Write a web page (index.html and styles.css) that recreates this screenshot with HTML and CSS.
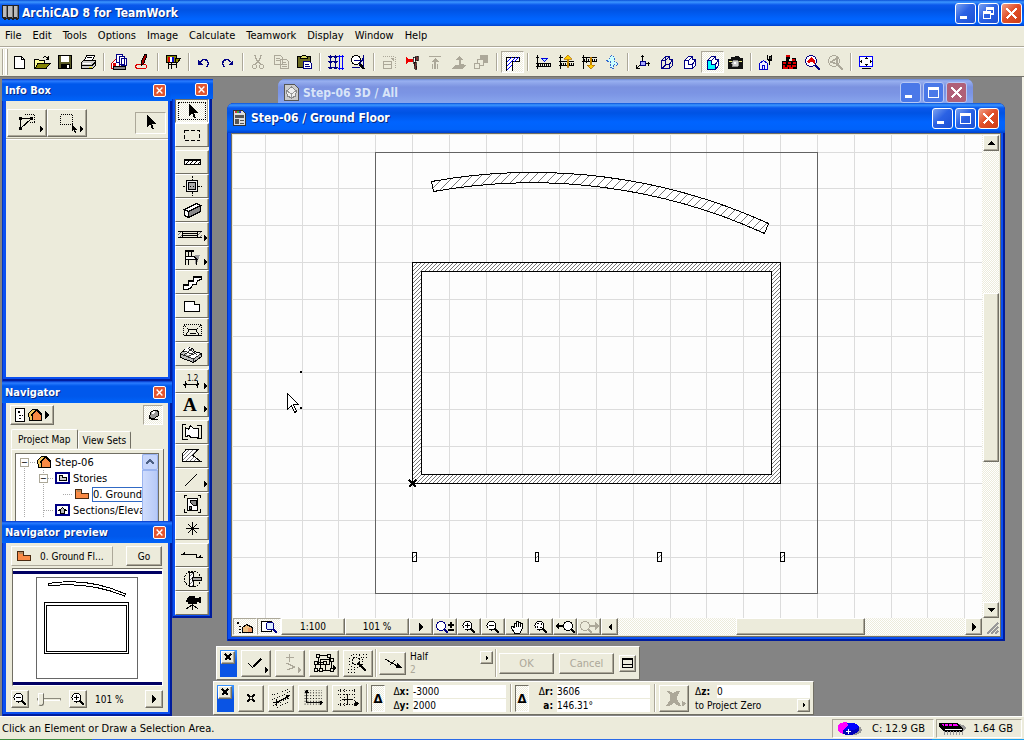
FILE: index.html
```html
<!DOCTYPE html>
<html lang="en">
<head>
    <meta charset="UTF-8">
    <title>ArchiCAD 8 for TeamWork</title>
    <link rel="stylesheet" href="styles.css">
</head>
<body>
    <!-- shared patterns and glyphs -->
    <svg class="defs" width="0" height="0" aria-hidden="true">
        <defs>
            <pattern id="hatch" width="4" height="4" patternUnits="userSpaceOnUse">
                <path d="M-1 5L5 -1M-1 1L1 -1M3 5L5 3" stroke="#777" stroke-width="1.1"/>
            </pattern>
            <pattern id="hatch-wide" width="9" height="9" patternUnits="userSpaceOnUse">
                <path d="M-1 10L10 -1" stroke="#777" stroke-width="1"/>
            </pattern>
            <pattern id="dots" width="3" height="3" patternUnits="userSpaceOnUse">
                <path d="M0 0h1v1h-1z" fill="#000"/>
            </pattern>
            <symbol id="i-min" viewBox="0 0 19 19"><path d="M4 12h7v3H4z" fill="#fff"/></symbol>
            <symbol id="i-max" viewBox="0 0 19 19"><path d="M4 4h11v11H4zM5 7v7h9V7z" fill="#fff" fill-rule="evenodd"/></symbol>
            <symbol id="i-restore" viewBox="0 0 19 19"><path d="M7 3h8v8h-3V9h2V6H8v1H7zM4 7h8v8H4zM5 10v4h6v-4z" fill="#fff" fill-rule="evenodd"/></symbol>
            <symbol id="i-close" viewBox="0 0 19 19"><path d="M4.500 4.500L14.500 14.500M14.500 4.500L4.500 14.500" stroke="#fff" stroke-width="2.400"/></symbol>
            <symbol id="i-arrow" viewBox="0 0 10 16"><path d="M1 0v12l3-3 2 5h2l-2-5h4z"/></symbol>
            <symbol id="i-right" viewBox="0 0 4 8"><path d="M0 0l4 4-4 4z"/></symbol>
            <symbol id="i-story" viewBox="0 0 16 12"><path d="M1.500 1.500h6v4h7v5h-13z" fill="#f98a45" stroke="#4a2a10"/><path d="M3 2h4v2H3z" fill="#b58a60"/></symbol>
            <symbol id="i-house" viewBox="0 0 16 14"><path d="M1.500 5.500l4-4h4v11h-7z" fill="#f0c860" stroke="#000"/><path d="M5.500 6.500l4-4 5 4v6h-9z" fill="#f98a45" stroke="#000"/><path d="M4 7l6-5 5 5" fill="none" stroke="#000" stroke-width="1.500"/></symbol>
            <symbol id="i-lens" viewBox="0 0 14 14"><circle cx="5.500" cy="5.500" r="4.500" fill="#fff" stroke="#000"/><path d="M9 9l4 4" stroke="#000" stroke-width="2.400"/></symbol>
        </defs>
    </svg>

    <div class="app">
        <header class="titlebar">
            <svg class="app-icon" viewBox="0 0 17 18"><path d="M0 1h17v13l-2 3-2-3-2 3-2-3-2 3-2-3-2 3-3-3z" fill="#222"/><path d="M1 2h3v11H1zM6 2h4v11H6zM12 2h3v11h-3z" fill="#bbb"/><path d="M4 2h1v12H4zM10 2h1v12h-1zM15 2h1v12h-1z" fill="#777"/></svg>
            <h1 class="title">ArchiCAD 8 for TeamWork</h1>
            <div class="win-buttons">
                <button class="wb" aria-label="Minimize"><svg><use href="#i-min"/></svg></button>
                <button class="wb" aria-label="Restore"><svg><use href="#i-restore"/></svg></button>
                <button class="wb close" aria-label="Close"><svg><use href="#i-close"/></svg></button>
            </div>
        </header>

        <nav class="menubar">
            <button>File</button><button>Edit</button><button>Tools</button><button>Options</button><button>Image</button><button>Calculate</button><button>Teamwork</button><button>Display</button><button>Window</button><button>Help</button>
        </nav>

        <div class="toolbar">
            <span class="grip"></span>
            <button aria-label="New"><svg viewBox="0 0 17 17"><path d="M3.500 2.500h7l3 3v9h-10z" fill="#fff" stroke="#000"/><path d="M10.500 2.500v3h3" fill="none" stroke="#000"/></svg></button>
            <button aria-label="Open"><svg viewBox="0 0 17 17"><path d="M0.500 14V5.500h4l1 1h5v3" fill="#ffff9c" stroke="#000"/><path d="M1 14.500l3-5h12l-4 5z" fill="#848400" stroke="#000"/><path d="M9 3.500q3-2 5 1M14.500 2v3h-3" fill="none" stroke="#000"/></svg></button>
            <button aria-label="Save"><svg viewBox="0 0 17 17"><path d="M1.500 1.500h13v13h-13z" fill="#5b5b28" stroke="#000"/><path d="M4 2h8v6H4z" fill="#fff"/><path d="M4 10h9v5H4z" fill="#000"/><path d="M10 11h2v3h-2z" fill="#fff"/></svg></button>
            <button aria-label="Print"><svg viewBox="0 0 17 17"><path d="M4.500 6.500l2-5h8l-2 5z" fill="#fff" stroke="#000"/><path d="M1.500 8.500l2-2h12v5l-3 3h-11z" fill="#ccc" stroke="#000"/><path d="M2 11.500h10l3-3M7 3.500h5" fill="none" stroke="#000"/><path d="M3 9.500h8" stroke="#fff"/><path d="M9 13h3" stroke="#dd0"/></svg></button>
            <span class="sep"></span>
            <button aria-label="Send changes"><svg viewBox="0 0 17 17"><path d="M0.500 9.500l4-4 4 4v5h-8z" fill="#fff" stroke="#c00"/><path d="M2 9h3v5H2z" fill="#d00"/><path d="M2.500 12.500h12v3h-12z" fill="#888" stroke="#000"/><path d="M5.500 0.500h6v8h-6z" fill="#fff" stroke="#000084"/><path d="M8.500 2.500h5v8h-5zM10.500 4.500h5v7h-5z" fill="#fff" stroke="#000084"/></svg></button>
            <button aria-label="Mark up"><svg viewBox="0 0 17 17"><ellipse cx="7" cy="12.500" rx="5.500" ry="2.500" fill="none" stroke="#d00"/><path d="M11 0l2 1-3 8-3 3 0-4z" fill="#a00" stroke="#000"/></svg></button>
            <span class="sep"></span>
            <button aria-label="Library"><svg viewBox="0 0 17 17"><path d="M1.500 1.500h10v7h-10z" fill="#848400" stroke="#000"/><path d="M3 3h2v5H3z" fill="#d00"/><path d="M5 3h2v5H5z" fill="#fff"/><path d="M7 3h2v5H7z" fill="#00d"/><path d="M10.500 4.500h5l-3 4h-2z" fill="#848400" stroke="#000"/><path d="M3.500 9v6M6.500 9v6M11.500 9v5M3 10.500h9" stroke="#000"/></svg></button>
            <span class="sep"></span>
            <button aria-label="Undo"><svg viewBox="0 0 17 17"><path d="M4 8q5-5 8 0 1 3-2 5" fill="none" stroke="#000084" stroke-width="1.400"/><path d="M2 6v5h5z" fill="#000084"/></svg></button>
            <button aria-label="Redo"><svg viewBox="0 0 17 17"><path d="M12 8q-5-5-8 0-1 3 2 5" fill="none" stroke="#000084" stroke-width="1.400"/><path d="M14 6v5H9z" fill="#000084"/></svg></button>
            <span class="sep"></span>
            <button aria-label="Cut" disabled><svg viewBox="0 0 17 17"><path d="M5 1l1 4 5 6M11 1l-1 4-5 6" fill="none" stroke="#aca899" stroke-width="1.300"/><circle cx="4.500" cy="12.500" r="2" fill="none" stroke="#aca899"/><circle cx="11.500" cy="12.500" r="2" fill="none" stroke="#aca899"/></svg></button>
            <button aria-label="Copy" disabled><svg viewBox="0 0 17 17"><path d="M1.500 1.500h6l2 2v7h-8zM7.500 5.500h6l2 2v7h-8z" fill="#ecebdb" stroke="#aca899"/><path d="M3 4.500h4M3 6.500h4M9 8.500h4M9 10.500h5M9 12.500h5" stroke="#aca899"/></svg></button>
            <button aria-label="Paste"><svg viewBox="0 0 17 17"><path d="M1.500 2.500h13v11h-13z" fill="#6b6b20" stroke="#000"/><path d="M4.500 3.500l2-2h3l2 2v1h-7z" fill="#dd6" stroke="#000"/><path d="M7.500 7.500h6l2 2v5h-8z" fill="#fff" stroke="#000084"/><path d="M9 10.500h4M9 12.500h5" stroke="#000084"/></svg></button>
            <span class="sep"></span>
            <button aria-label="Grid"><svg viewBox="0 0 17 17"><path d="M1 2.500h10M1 7.500h10M1 13.500h10M3.500 1v14M8.500 1v14" stroke="#000084"/><path d="M2 2h3v2H2zM7 2h3v2H7zM2 7h3v2H2zM7 7h3v2H7zM2 13h3v2H2zM7 13h3v2H7z" fill="#000084"/><path d="M12.500 1v15M15.500 1v15M11 2.500h6M11 14.500h6" stroke="#00f"/></svg></button>
            <button aria-label="Find"><svg viewBox="0 0 17 17"><circle cx="6" cy="6" r="4.500" fill="#fff" stroke="#000"/><path d="M9 9l5 6" stroke="#000" stroke-width="2.500"/><path d="M4 6.500h10M9 11L14 3M13.500 1v12M2 13.500h8" stroke="#000084"/></svg></button>
            <span class="sep"></span>
            <button aria-label="Resize" disabled><svg viewBox="0 0 17 17"><path d="M2 2.500h12M14.500 3v11" stroke="#aca899" stroke-dasharray="1 1"/><path d="M2.500 7.500h8v7h-8zM2 10.500h8" fill="none" stroke="#aca899"/><path d="M9 4h4v4z" fill="#aca899"/></svg></button>
            <button aria-label="Split"><svg viewBox="0 0 17 17"><path d="M2 3l3 2h4v3H5L2 10z" fill="#e00"/><path d="M9 3h2v6H9z" fill="#fff" stroke="#000" stroke-width=".7"/><path d="M11 3l3-1v5l-3-1zM10 8h2l1 7h-2z" fill="#733" stroke="#000" stroke-width=".7"/></svg></button>
            <button aria-label="Adjust" disabled><svg viewBox="0 0 17 17"><path d="M2 2h12v1H2zM8 4l4 4h-3v7H7V8H4zM5 10h1v5H5zM10 10h1v5h-1z" fill="#aca899"/></svg></button>
            <button aria-label="Elevate" disabled><svg viewBox="0 0 17 17"><path d="M9 2l4 4h-2v4l5 1-4 4H1l4-4h4V6H5z" fill="#aca899"/></svg></button>
            <button aria-label="Order" disabled><svg viewBox="0 0 17 17"><path d="M7.500 1.500h7v7h-7z" fill="#aca899" stroke="#aca899"/><path d="M4.500 5.500h6v6h-6z" fill="#ecebdb" stroke="#aca899"/><path d="M1.500 9.500h5v5h-5z" fill="#ecebdb" stroke="#aca899"/></svg></button>
            <span class="sep"></span>
            <button class="pressed" aria-label="Wall cleanup"><svg viewBox="0 0 17 17"><path d="M2.500 17V3.500h13v4h-7V17" fill="#fff" stroke="#000"/><path d="M3 8l5-5M3 12l9-9M3 16l5-5M10 8l5-5" stroke="#00f"/></svg></button>
            <span class="sep"></span>
            <button aria-label="Go to story"><svg viewBox="0 0 17 17"><path d="M2.500 1v14M1 3.500h3M1 9.500h15M1 12.500h15" stroke="#000"/><path d="M3 11h13" stroke="#000" stroke-width="2" stroke-dasharray="1 1"/><path d="M6.500 4.500h6l-3 3z" fill="#aef" stroke="#00d"/></svg></button>
            <button aria-label="Story up"><svg viewBox="0 0 17 17"><path d="M2.500 1v14M1 3.500h4M1 7.500h15M1 11.500h15" stroke="#000"/><path d="M3 9.500h13" stroke="#000" stroke-width="2" stroke-dasharray="1 1"/><path d="M9.500 1l4 4h-3v8H9V5H6z" fill="#fc0" stroke="#a60" stroke-width=".7"/></svg></button>
            <button aria-label="Story down"><svg viewBox="0 0 17 17"><path d="M2.500 1v14M1 3.500h15M1 7.500h15M5.500 3v6" stroke="#000"/><path d="M3 5.500h13" stroke="#000" stroke-width="2" stroke-dasharray="1 1"/><path d="M9.500 15l4-4h-3V3H9v8H6z" fill="#fc0" stroke="#a60" stroke-width=".7"/></svg></button>
            <button aria-label="Ghost story"><svg viewBox="0 0 17 17"><path d="M6 3q3-3 5 1l-1 3 4 3-2 2-2-2-1 5-3-2 1-5-5-1 3-2z" fill="#cff" stroke="#36c" stroke-dasharray="2 1"/></svg></button>
            <span class="sep"></span>
            <button aria-label="Axonometry"><svg viewBox="0 0 17 17"><path d="M7.500 1v8L2 14M8 9.500h7M6 2.500h3M13.500 8v4M1.500 11v3h3" fill="none" stroke="#000"/><path d="M5.500 7.500h5v4h-5z" fill="#aaf" stroke="#000084"/></svg></button>
            <button aria-label="3D wireframe"><svg viewBox="0 0 17 17"><path d="M3.500 6.500l4-4h4v3h3v6l-3 3h-8zM3.500 6.500h4v4h4v4M7.500 6.500l4-4M11.500 10.500l3-5M7.500 3v8l-3 3" fill="none" stroke="#000084"/></svg></button>
            <button aria-label="3D hidden line"><svg viewBox="0 0 17 17"><path d="M3.500 6.500l4-4h4v3h3v6l-3 3h-8zM3.500 6.500h4v4h4v4M7.500 6.500l4-4M11.500 10.500l3-5" fill="#fff" stroke="#000084"/></svg></button>
            <button class="pressed" aria-label="3D shading"><svg viewBox="0 0 17 17"><path d="M3.500 6.500l4-4h4v3h3v6l-3 4h-8z" fill="#fff" stroke="#000084"/><path d="M3.500 6.500h4v4h4v5h-8z" fill="#0ff" stroke="#000084"/><path d="M7.500 6.500l4-4M11.500 10.500l3-5" stroke="#000084"/></svg></button>
            <button aria-label="Photo render"><svg viewBox="0 0 17 17"><path d="M1 5h3V3h3v2l1-3h4l1 2h3v11H1z" fill="#111"/><circle cx="8.500" cy="9.500" r="3.500" fill="#ccc" stroke="#888"/><circle cx="8" cy="9" r="1.500" fill="#fff"/><path d="M2 7.500h3M12 7.500h3" stroke="#ee8"/></svg></button>
            <span class="sep"></span>
            <button aria-label="Check"><svg viewBox="0 0 17 17"><path d="M1.500 15.500v-6l4-3 4 3v6zM4.500 15v-4h2v4" fill="#eef" stroke="#00c"/><path d="M9.500 1v4l2 2v4M13.500 1v4l-2 2M11 2h2v4h-2z" fill="#555" stroke="#000"/></svg></button>
            <button aria-label="Bricks"><svg viewBox="0 0 17 17"><path d="M1 7h4V1h4v4h-1v2h3V4h4v3h1v8H1z" fill="#000"/><path d="M5 2h4M2 8.500h3M7 8.500h3M11 6h3M12 8.500h3M2 11.500h2M6 11.500h4M11 11.500h4M2 14h5M8 14h4" stroke="#d00" stroke-width="2"/></svg></button>
            <button aria-label="Zoom to model"><svg viewBox="0 0 17 17"><circle cx="7" cy="7" r="5.500" fill="#fff" stroke="#000084"/><path d="M3 7l4-4 4 4v3l-3-2-4 1z" fill="#d00"/><path d="M11 11l5 5" stroke="#000084" stroke-width="2.500"/></svg></button>
            <button aria-label="Zoom previous" disabled><svg viewBox="0 0 17 17"><circle cx="7" cy="7" r="5.500" fill="#ecebdb" stroke="#aca899"/><path d="M4 8l6-4v6zM11 11l5 5" stroke="#aca899" stroke-width="1.500" fill="none"/></svg></button>
            <span class="sep"></span>
            <button aria-label="Full screen"><svg viewBox="0 0 17 17"><path d="M1.500 2.500h13v10h-13z" fill="#fff" stroke="#00f" stroke-width="1.500"/><path d="M8 3l2 2H6zM8 12l2-2H6zM2 7.500l2-2v4zM14 7.500l-2-2v4zM4 14h9v1H4z"/></svg></button>
        </div>

        <main class="desktop">
            <section class="palette infobox">
                <div class="pal-title"><h2>Info Box</h2><button class="pal-close" aria-label="Close Info Box"><svg><use href="#i-close"/></svg></button></div>
                <div class="pal-body">
                    <div class="info-row">
                        <button class="btn info-btn" aria-label="Selection method"><svg viewBox="0 0 40 28"><path d="M13.500 9.500v10M13 9.500h11M14 19L24 10" stroke="#000" fill="none"/><path d="M12 8h3v3h-3zM23 8h3v3h-3zM12 18h3v3h-3z"/><path d="M17.500 5.500h10v8h-5" fill="none" stroke="#000" stroke-dasharray="1 1"/><path d="M33 17l4 3-4 3z"/></svg></button>
                        <button class="btn info-btn" aria-label="Selection shape"><svg viewBox="0 0 40 28"><path d="M13.500 5.500h12v10h-12z" fill="none" stroke="#000" stroke-dasharray="1 1"/><path d="M25 15v7l2-1 1 3 1-1-1-2h2z"/><path d="M33 17l4 3-4 3z"/></svg></button>
                        <button class="pressed-flat" aria-label="Arrow"><svg class="arrow"><use href="#i-arrow"/></svg></button>
                    </div>
                </div>
            </section>

            <section class="palette tools">
                <div class="pal-title"><button class="pal-close" aria-label="Close tools"><svg><use href="#i-close"/></svg></button></div>
                <div class="tool-list">
                    <button class="tool active" aria-label="Arrow"><svg viewBox="0 0 34 24"><path d="M14 4v13l3-3 2 5h2l-2-5h4z"/></svg></button>
                    <button class="tool" aria-label="Marquee"><svg viewBox="0 0 34 24"><path d="M9.500 7.500h15v10h-15z" fill="none" stroke="#000" stroke-dasharray="4 2"/></svg></button>
                    <i></i>
                    <button class="tool" aria-label="Wall"><svg viewBox="0 0 34 24"><path d="M9.500 9.500h16v5h-16z" fill="#fff" stroke="#000"/><path d="M10 10h15" stroke="#000" stroke-width="2"/><path d="M11 14l3-3M15 14l3-3M19 14l3-3M23 14l2-2" stroke="#000"/></svg></button>
                    <button class="tool" aria-label="Column"><svg viewBox="0 0 34 24"><path d="M11.500 6.500h11v11h-11z" fill="#eee" stroke="#000"/><path d="M13.500 8.500h7v7h-7z" fill="#aaa" stroke="#000"/><path d="M17.500 2v4M17.500 18v4M8 12.500h4M23 12.500h4" stroke="#000" stroke-dasharray="2 1"/><path d="M15 10h4v4h-4z" fill="url(#dots)"/></svg></button>
                    <button class="tool" aria-label="Beam"><svg viewBox="0 0 34 24"><path d="M9.500 11.500l12-6 4 2v6l-12 6-4-2z" fill="#888" stroke="#000"/><path d="M9.500 11.500l12-6 4 2-12 6z" fill="#fff" stroke="#000"/><path d="M9.500 11.500l4 2v6l-4-2z" fill="#fff" stroke="#000"/></svg></button>
                    <button class="tool" aria-label="Window"><svg viewBox="0 0 34 24"><path d="M3 9.500h24M3 15.500h24M7.500 10v5M22.500 10v5M8 11.500h14M8 13.500h14" stroke="#000"/><path d="M3 10h4v5H3zM23 10h4v5h-4z" fill="url(#hatch)"/><path d="M29 13l3 3-3 3z"/></svg></button>
                    <button class="tool" aria-label="Object"><svg viewBox="0 0 34 24"><path d="M20 9h5l-2 6-3 4z" fill="#999"/><path d="M11 13h9v-3h-9z" fill="#fff"/><path d="M10.500 4v15M10 5h9M13.500 5v5M16.500 5v5M10 10.500h9l3 3H11M21.500 13v6M13.500 14v5" fill="none" stroke="#000" stroke-width="1.500"/><path d="M29 13l3 3-3 3z"/></svg></button>
                    <button class="tool" aria-label="Stair"><svg viewBox="0 0 34 24"><path d="M8.500 15.500h5v-4h5v-4h8v2l-4 1-1 4h-4l-1 3-4 2h-4z" fill="#fff" stroke="#000"/><path d="M8 15h6M13 11h6M18 7h9" stroke="#000" stroke-width="2"/></svg></button>
                    <button class="tool" aria-label="Slab"><svg viewBox="0 0 34 24"><path d="M9.500 7.500h10v3h5v7h-15z" fill="#fff" stroke="#000" stroke-width="1.500"/></svg></button>
                    <button class="tool" aria-label="Roof"><svg viewBox="0 0 34 24"><path d="M8.500 6.500h18v11h-18zM9 7l5 5M26 7l-5 5" fill="none" stroke="#000" stroke-dasharray="1 1"/><path d="M10.500 17.500l4-6h6l4 6zM15 15h6" fill="none" stroke="#000"/></svg></button>
                    <button class="tool" aria-label="Mesh"><svg viewBox="0 0 34 24"><path d="M5.500 11.500l7-6 5 1 2 3 7 2v3l-8 6-13-5z" fill="#bbb" stroke="#000"/><path d="M8 9l5-4 4 2 2 3 7 2-8 5z" fill="#fff"/><path d="M6 12l12 5 8-5M18 17v4M9 9l10 4M13 6l9 7M9 13l8-6M13 15l8-6" stroke="#000" stroke-width=".8" fill="none"/></svg></button>
                    <i></i>
                    <button class="tool" aria-label="Dimension"><svg viewBox="0 0 34 24"><path d="M8 15.500h16M10.500 12v7M22.500 12v7M9 17l3-3M21 17l3-3" stroke="#000"/><text x="12" y="12" class="dim-text">1.2</text><path d="M29 14l3 3-3 3z"/></svg></button>
                    <button class="tool" aria-label="Text"><svg viewBox="0 0 34 24"><text x="8" y="18" class="text-tool">A</text><path d="M29 13l3 3-3 3z"/></svg></button>
                    <i></i>
                    <button class="tool" aria-label="Zone"><svg viewBox="0 0 34 24"><path d="M10.500 4.500h-3v15h5M22 5.500h4v13h-4" fill="none" stroke="#000"/><path d="M10.500 16.500v-9l3 2 2-4 3 3h5v9h-8l-1-2z" fill="#fff" stroke="#000"/></svg></button>
                    <button class="tool" aria-label="Fill"><svg viewBox="0 0 34 24"><path d="M7 17.500v-7l4-5h12l-5 6 8 6z" fill="#fff"/><path d="M7 17.500v-7l4-5h12l-5 6 8 6z" fill="url(#hatch)" stroke="#000"/></svg></button>
                    <button class="tool" aria-label="Line"><svg viewBox="0 0 34 24"><path d="M10 18L22 6" stroke="#000"/><path d="M29 13l3 3-3 3z"/></svg></button>
                    <button class="tool" aria-label="Figure"><svg viewBox="0 0 34 24"><path d="M12 3.500H9.500V6M23 3.500h2.500V6M9.500 17v3.500H12M25.500 17v3.500H23" fill="none" stroke="#000"/><path d="M12.500 6.500h10v12h-10z" fill="#fff" stroke="#000"/><path d="M15 8h6v5h-3l-2-2zM14 14h2v3h-2z" fill="#888" stroke="#000"/></svg></button>
                    <button class="tool" aria-label="Hotspot"><svg viewBox="0 0 34 24"><path d="M11 12.500h13M17.500 6v13M13 8l9 9M22 8l-9 9" stroke="#000"/></svg></button>
                    <i></i>
                    <button class="tool" aria-label="Section"><svg viewBox="0 0 34 24"><path d="M6 11.500h15v3h7" fill="none" stroke="#000"/><path d="M7 11l3-3v3zM23 14l3-3v3z"/></svg></button>
                    <button class="tool" aria-label="Detail"><svg viewBox="0 0 34 24"><circle cx="17.500" cy="12" r="8" fill="none" stroke="#000" stroke-dasharray="2 1"/><path d="M14 5h4v14h-4z" fill="#fff"/><path d="M14 5h4v14h-4z" fill="url(#hatch)" stroke="#000"/><path d="M17.500 10.500h9v3h-9z" fill="#aaa" stroke="#000"/></svg></button>
                    <button class="tool" aria-label="Camera"><svg viewBox="0 0 34 24"><path d="M12 7l3-2h5v2h2l4-1v6l-4-1v2h-9v-2h-2V9h1z"/><path d="M17.500 13v6M17 14l-6 4M18 14l5 4" stroke="#000"/></svg></button>
                </div>
            </section>

            <section class="palette navigator">
                <div class="pal-title"><h2>Navigator</h2><button class="pal-close" aria-label="Close Navigator"><svg><use href="#i-close"/></svg></button></div>
                <div class="pal-body">
                    <div class="nav-row">
                        <button class="btn nav-btn" aria-label="Project chooser"><svg class="nav-list" viewBox="0 0 10 14"><path d="M.5.500h9v13h-9z" fill="#fff" stroke="#000"/><path d="M3 3h2v2H3zM4 7h2v1H4zM4 10h2v1H4zM7 7h1v1H7z"/></svg><svg class="i-house"><use href="#i-house"/></svg><svg class="i-right"><use href="#i-right"/></svg></button>
                        <button class="pin" aria-label="Publisher"><svg viewBox="0 0 14 14"><path d="M3 10L5 4l5-2 3 2-1 4-5 3z" fill="#999" stroke="#000"/><path d="M6 5l3-1" stroke="#fff" stroke-width="2"/><path d="M3 9l4 3M7 12l5-1" stroke="#000"/></svg></button>
                    </div>
                    <div class="tabs" role="tablist">
                        <button class="tab on" role="tab">Project Map</button><button class="tab" role="tab">View Sets</button>
                    </div>
                    <div class="tab-panel">
                        <div class="tree-box">
                            <ul class="tree">
                                <li><span class="pm">&minus;</span><svg class="i-house"><use href="#i-house"/></svg><span>Step-06</span></li>
                                <li class="l2"><span class="pm">&minus;</span><svg class="i-box" viewBox="0 0 15 12"><path d="M1 1h13v10H1z" fill="#fff" stroke="#000084" stroke-width="2"/><path d="M4.500 3.500h3v2h4v3h-7z" fill="#ccc" stroke="#000"/></svg><span>Stories</span></li>
                                <li class="l3"><svg class="i-story"><use href="#i-story"/></svg><span class="sel">0. Ground</span></li>
                                <li class="l2 leaf"><svg class="i-box" viewBox="0 0 15 12"><path d="M1 1h13v10H1z" fill="#fff" stroke="#000084" stroke-width="2"/><path d="M4 6.500l3.500-3 3.500 3h-1.500v3h-4v-3z" fill="#bbb" stroke="#000"/></svg><span>Sections/Eleva</span></li>
                            </ul>
                            <div class="tree-scroll"><button aria-label="Scroll up"><svg viewBox="0 0 10 6"><path d="M1 5l4-4 4 4" fill="none" stroke="#4d6185" stroke-width="2"/></svg></button><span></span></div>
                        </div>
                    </div>
                </div>
            </section>

            <section class="palette preview">
                <div class="pal-title"><h2>Navigator preview</h2><button class="pal-close" aria-label="Close preview"><svg><use href="#i-close"/></svg></button></div>
                <div class="pal-body">
                    <div class="go-row">
                        <div class="go-name"><svg class="i-story"><use href="#i-story"/></svg><span>0. Ground Fl...</span></div>
                        <button class="btn go">Go</button>
                    </div>
                    <div class="thumb">
                        <svg viewBox="0 0 149 108"><path d="M23.500 3.500h101v101h-101z" fill="none" stroke="#666"/><path d="M31.500 28.500h84v51h-84zM33.500 31.500h80v46h-80z" fill="none" stroke="#000"/><path d="M35.500 9.500Q75 3 112.500 20l-1 2Q75 7 36 12z" fill="none" stroke="#000"/></svg>
                    </div>
                    <div class="zoom-row">
                        <button class="btn" aria-label="Zoom out"><svg viewBox="0 0 14 14"><use href="#i-lens"/><path d="M3 5.500h5" stroke="#000"/></svg></button>
                        <input type="range" aria-label="Zoom" min="0" max="100" value="0">
                        <button class="btn" aria-label="Zoom in"><svg viewBox="0 0 14 14"><use href="#i-lens"/><path d="M3 5.500h5M5.500 3v5" stroke="#000"/></svg></button>
                        <span class="zoom-val">101 %</span>
                        <button class="btn last" aria-label="More"><svg class="i-right"><use href="#i-right"/></svg></button>
                    </div>
                </div>
            </section>

            <section class="window win-3d">
                <div class="win-title">
                    <svg class="doc-icon" viewBox="0 0 15 17"><path d="M.5.500h10l4 4v12H.5z" fill="#ccc" stroke="#555"/><path d="M7.500 3l5 4-1 5-4 2-4-2-1-5z" fill="#eee" stroke="#888"/><path d="M3 7l4 3 5-3M7 10v4" fill="none" stroke="#999"/></svg>
                    <h2>Step-06 3D / All</h2>
                    <div class="win-buttons">
                        <button class="wb" aria-label="Minimize"><svg><use href="#i-min"/></svg></button>
                        <button class="wb" aria-label="Maximize"><svg><use href="#i-max"/></svg></button>
                        <button class="wb close" aria-label="Close"><svg><use href="#i-close"/></svg></button>
                    </div>
                </div>
            </section>

            <section class="window win-plan">
                <div class="win-title">
                    <svg class="doc-icon" viewBox="0 0 13 16"><path d="M.5.500h9l3 3v12H.5z" fill="#ddd" stroke="#333"/><path d="M2 1h2v2H2z" fill="#c33"/><path d="M4 1h2v2H4z" fill="#3a3"/><path d="M6 1h2v2H6z" fill="#33c"/><path d="M2 5h9v3H2zM2 9h4v5H2zM7 10h4v1H7zM7 13h4v1H7z" fill="#555"/></svg>
                    <h2>Step-06 / Ground Floor</h2>
                    <div class="win-buttons">
                        <button class="wb" aria-label="Minimize"><svg><use href="#i-min"/></svg></button>
                        <button class="wb" aria-label="Maximize"><svg><use href="#i-max"/></svg></button>
                        <button class="wb close" aria-label="Close"><svg><use href="#i-close"/></svg></button>
                    </div>
                </div>
                <div class="win-body">
                    <svg class="plan" aria-label="Floor plan">
                        <g transform="translate(-233 -135)" fill="none">
                            <path d="M265.500 135v484M302.500 135v484M338.500 135v484M375.500 135v484M412.500 135v484M449.500 135v484M486.500 135v484M522.500 135v484M559.500 135v484M596.500 135v484M633.500 135v484M670.500 135v484M706.500 135v484M743.500 135v484M780.500 135v484M817.500 135v484M854.500 135v484M891.500 135v484M927.500 135v484M964.500 135v484M233 152.500h750M233 188.500h750M233 225.500h750M233 262.500h750M233 299.500h750M233 336.500h750M233 372.500h750M233 409.500h750M233 446.500h750M233 483.500h750M233 520.500h750M233 557.500h750M233 593.500h750" stroke="#dcdcdc"/>
                            <path d="M375.500 152.500h442v441h-442z" stroke="#636363"/>
                            <g fill-rule="evenodd" stroke="#000">
                                <path d="M412.500 262.500h368v221h-368zM421.500 271.500v203h350v-203z" fill="#fff"/>
                                <path d="M412.500 262.500h368v221h-368zM421.500 271.500v203h350v-203z" fill="url(#hatch)"/>
                                <path d="M431.500 181.500A570 570 0 0 1 768.500 223.500L764.500 233.500A559 559 0 0 0 433.500 191.500z" fill="#fff"/>
                                <path d="M431.500 181.500A570 570 0 0 1 768.500 223.500L764.500 233.500A559 559 0 0 0 433.500 191.500z" fill="url(#hatch-wide)"/>
                                <path d="M412.500 552.500h4v9h-4zM535.500 552.500h3v9h-3zM657.500 552.500h4v9h-4zM780.500 552.500h4v9h-4z" fill="#fff"/>
                                <path d="M413 558l3-3M658 558l3-3M781 558l3-3M536 558l2-2" stroke="#777"/>
                            </g>
                            <path d="M409 480l7 7M416 480l-7 7" stroke="#000" stroke-width="2"/>
                            <path d="M300 371h2v2h-2zM300 407h2v2h-2z" fill="#000"/>
                            <path d="M287.500 393.500v16l4-4 3 7 2-1-3-7h5z" fill="#fff" stroke="#000"/>
                        </g>
                    </svg>
                    <div class="vscroll">
                        <button class="btn" aria-label="Scroll up"><svg viewBox="0 0 8 4"><path d="M4 0l4 4H0z"/></svg></button>
                        <span class="vthumb"></span>
                        <button class="btn" aria-label="Scroll down"><svg viewBox="0 0 8 4"><path d="M0 0h8L4 4z"/></svg></button>
                    </div>
                    <div class="view-bar">
                        <button class="vb dither" aria-label="Navigator"><svg viewBox="0 0 18 14"><path d="M1 2h2v2H1zM3 6h2v1H3zM3 9h2v1H3zM3 12h2v1H3z"/><path d="M6.500 7.500l4-3 6 3v5h-10z" fill="#f0c080" stroke="#000"/><path d="M12 8h4v4h-4z" fill="#e96"/></svg></button>
                        <button class="vb dither" aria-label="Preview"><svg viewBox="0 0 16 14"><path d="M.5 1.500h10v10H.5z" fill="#fff" stroke="#000"/><circle cx="9" cy="6" r="4" fill="#def" stroke="#000084"/><path d="M12 9l4 4" stroke="#000084" stroke-width="2"/></svg></button>
                        <button class="btn scale">1:100</button>
                        <button class="btn scale">101 %</button>
                        <button class="btn vb" aria-label="Scale menu"><svg class="i-right"><use href="#i-right"/></svg></button>
                        <button class="btn vb" aria-label="Zoom by"><svg viewBox="0 0 18 14"><circle cx="5" cy="6" r="4.500" fill="#fff" stroke="#000084"/><path d="M8 9l4 4" stroke="#000084" stroke-width="2"/><path d="M12 5h6M15 2v6M12 10h6" stroke="#000" stroke-width="2"/></svg></button>
                        <button class="btn vb" aria-label="Zoom in"><svg viewBox="0 0 14 14"><use href="#i-lens"/><path d="M3 5.500h5M5.500 3v5" stroke="#000"/></svg></button>
                        <button class="btn vb" aria-label="Zoom out"><svg viewBox="0 0 14 14"><use href="#i-lens"/><path d="M3 5.500h5" stroke="#000"/></svg></button>
                        <button class="btn vb" aria-label="Pan"><svg viewBox="0 0 14 14"><path d="M4.500 13L1 7l2-1 1 2V3h2V1h2v1h2v1h2v6l-2 4z" fill="#fff" stroke="#000"/><path d="M6.500 3v4M8.500 2v5M10.500 3v4" stroke="#000"/></svg></button>
                        <button class="btn vb" aria-label="Fit in window"><svg viewBox="0 0 14 14"><use href="#i-lens"/><path d="M3 3h2v1H3zM7 3h1v2H7zM3 6h1v2H3zM6 7h2v1H6z"/></svg></button>
                        <button class="btn vb" aria-label="Previous zoom"><svg viewBox="0 0 20 14"><circle cx="13" cy="6" r="4.500" fill="#fff" stroke="#000"/><path d="M16 9l4 4M3 6h6" stroke="#000" stroke-width="2"/><path d="M0 6l4-4v8z"/></svg></button>
                        <button class="btn vb" aria-label="Next zoom" disabled><svg viewBox="0 0 20 14"><circle cx="6" cy="6" r="4.500" fill="none" stroke="#aca899"/><path d="M9 9l4 4M11 6h6" stroke="#aca899" stroke-width="2"/><path d="M20 6l-4-4v8z" fill="#aca899"/></svg></button>
                        <button class="btn sq" aria-label="Scroll left"><svg viewBox="0 0 4 8"><path d="M4 0v8L0 4z"/></svg></button>
                        <div class="htrack"><span class="hthumb"></span></div>
                        <button class="btn sq" aria-label="Scroll right"><svg class="i-right"><use href="#i-right"/></svg></button>
                    </div>
                    <svg class="resize" viewBox="0 0 17 17"><path d="M5 16L16 5M9 16l7-7M13 16l3-3" stroke="#999" stroke-width="1.500"/></svg>
                </div>
            </section>

            <section class="bar bar-control">
                <div class="strip"><button class="btn" aria-label="Close Control Box"><svg viewBox="0 0 8 8"><path d="M1 1l6 6M7 1L1 7" stroke="#000" stroke-width="1.700"/></svg></button></div>
                <button class="btn cb" aria-label="Perpendicular"><svg viewBox="0 0 26 24"><path d="M5 12l5 5" stroke="#000"/><path d="M10 16L18 8" stroke="#000" stroke-width="2.400"/><path d="M22 16l3 3-3 3z"/></svg></button>
                <button class="btn cb" aria-label="Offset" disabled><svg viewBox="0 0 26 24"><path d="M9 6.500h8M12.500 3v8M9 12l9 4-8 3" fill="none" stroke="#aca899" stroke-width="1.300"/><path d="M21 16l3 3-3 3z" fill="#aca899"/></svg></button>
                <button class="btn cb" aria-label="Suspend groups"><svg viewBox="0 0 26 24"><path d="M7.500 4.500h11v9h-11zM9.500 8.500h11v11h-11zM4.500 11.500h10v8h-10z" fill="none" stroke="#000"/><g fill="#ecebdb" stroke="#000"><circle cx="7" cy="5" r="2"/><circle cx="18" cy="5" r="2"/><circle cx="5" cy="12" r="2"/><circle cx="21" cy="9" r="2"/><circle cx="10" cy="19" r="2"/><circle cx="5" cy="19" r="2"/><circle cx="21" cy="19" r="2"/><circle cx="14" cy="12" r="2"/></g><path d="M22 14l3 3-3 3z"/></svg></button>
                <button class="btn cb" aria-label="Magic wand"><svg viewBox="0 0 26 24"><circle cx="11" cy="10" r="7" fill="none" stroke="#000" stroke-dasharray="1 2"/><circle cx="11" cy="10" r="4" fill="none" stroke="#000" stroke-dasharray="2 1"/><path d="M13 12l8 8" stroke="#000" stroke-width="2"/><path d="M3 18h8v4H3zM17 3h5v5h-5z" fill="url(#dots)"/></svg></button>
                <span class="vr"></span>
                <button class="btn cs" aria-label="Special snap"><svg viewBox="0 0 22 20"><path d="M3 6l14 8M8 12l5-5" stroke="#000"/><path d="M15 10l5 5h-6z"/></svg></button>
                <div class="half"><span>Half</span><span class="dim">2</span></div>
                <button class="btn mini" aria-label="Snap menu"><svg class="i-right"><use href="#i-right"/></svg></button>
                <span class="vr"></span>
                <button class="btn wide" disabled>OK</button>
                <button class="btn wide" disabled>Cancel</button>
                <button class="btn boxed" aria-label="Collapse"><svg viewBox="0 0 11 10"><path d="M.5.500h10v9H.5zM1 6.500h9" fill="none" stroke="#000"/><path d="M0 0h11v2H0z"/></svg></button>
            </section>

            <section class="bar bar-coords">
                <div class="strip"><button class="btn" aria-label="Close Coordinates"><svg viewBox="0 0 8 8"><path d="M1 1l6 6M7 1L1 7" stroke="#000" stroke-width="1.700"/></svg></button></div>
                <button class="btn cc" aria-label="Origin"><svg viewBox="0 0 26 24"><path d="M9 8l8 8M17 8l-8 8" stroke="#000" stroke-width="2"/><path d="M11 10h4v4h-4z" fill="#ecebdb" stroke="#000"/></svg></button>
                <button class="btn cc" aria-label="Skewed grid"><svg viewBox="0 0 26 24"><path d="M3 9L22 2M3 14L23 5M4 20L23 12M9 22l14-6" stroke="#000" stroke-dasharray="1 2"/><path d="M4 17h7M8 13v8M8 17L22 10" stroke="#000" stroke-width="1.500"/><path d="M18 9h5l-3 4z"/></svg></button>
                <button class="btn cd" aria-label="Grid"><svg viewBox="0 0 30 24"><path d="M4 3h21v18H4z" fill="url(#dots)"/><path d="M8.500 5v12h15" fill="none" stroke="#000"/><path d="M8.500 3l3 4h-6zM22 14l4 3-4 3z"/></svg></button>
                <button class="btn cd" aria-label="Snap grid"><svg viewBox="0 0 30 24"><path d="M5 3.500h21M5 8.500h21M5 18.500h21M7.500 2v20M12.500 2v20M22.500 2v20" stroke="#000" stroke-dasharray="1 2"/><path d="M10 13.500h11M15.500 8v11" stroke="#000"/><path d="M24 15l4 3-4 3z"/></svg></button>
                <span class="vr"></span>
                <button class="delta" aria-label="Relative XY">&Delta;</button>
                <div class="coords"><label for="dx">&Delta;<b>x:</b></label><input id="dx" value="-3000"><label for="dy">&Delta;<b>y:</b></label><input id="dy" value="2000"></div>
                <span class="vr"></span>
                <button class="delta" aria-label="Relative polar">&Delta;</button>
                <div class="coords"><label for="dr">&Delta;<b>r:</b></label><input id="dr" value="3606"><label for="da"><b>a:</b></label><input id="da" value="146.31°"></div>
                <span class="vr"></span>
                <button class="btn cd" aria-label="Gravity" disabled><svg viewBox="0 0 30 24"><path d="M6 4h3l5 3 5-3h3l-4 7 1 4 4 6h-3l-5-4-5 4H6l5-7V9z" fill="#aca899"/><path d="M24 15l4 3-4 3z" fill="#aca899"/></svg></button>
                <div class="zcoord">
                    <div><label for="dz">&Delta;<b>z:</b></label><input id="dz" value="0"></div>
                    <div><span>to Project Zero</span><button class="btn mini" aria-label="Reference level"><svg class="i-right"><use href="#i-right"/></svg></button></div>
                </div>
            </section>
        </main>

        <footer class="statusbar">
            <span class="msg">Click an Element or Draw a Selection Area.</span>
            <div class="cell disk"><svg viewBox="0 0 26 14"><ellipse cx="16" cy="8" rx="9" ry="5" fill="#999"/><path d="M1 4v4q4 5 11 5t10-5V4z" fill="#0000b8"/><ellipse cx="11.500" cy="4.500" rx="10.500" ry="4" fill="#00f"/><path d="M1 4q2-4 9-4l1 4-5 4v4q-5-2-5-5z" fill="#f0f"/><path d="M9 9.500h5M11.500 7v5" stroke="#fff"/></svg><span>C: 12.9 GB</span></div>
            <div class="cell mem"><svg viewBox="0 0 28 14"><path d="M20 2q7 1 7 4l-4 4z" fill="#999"/><path d="M0 1h18l6 5v4H5L0 5z" fill="#000"/><path d="M2 2h15l3 2H5z" fill="#f0f"/><path d="M5.500 2v2M9.500 2v2M13.500 2v2" stroke="#000"/><path d="M6 7.500h17" stroke="#fff"/><path d="M5 11h19" stroke="#999" stroke-dasharray="1 2" stroke-width="4"/></svg><span>1.64 GB</span></div>
        </footer>
        <div class="taskbar"></div>
    </div>
</body>
</html>
```
FILE: styles.css
```css
* { box-sizing: border-box; }
body {
    margin: 0;
    font-family: "DejaVu Sans Condensed", "DejaVu Sans", sans-serif;
    font-size: 11px;
    color: #000;
    background-color: #848484;
}
button, input {
    font: inherit;
    color: inherit;
    margin: 0;
    padding: 0;
    border: 0;
    background: none;
}
h1, h2, ul { margin: 0; padding: 0; }
svg { display: block; flex: none; shape-rendering: crispEdges; }
.defs { position: absolute; }
.app {
    display: flex;
    flex-direction: column;
    height: 100vh;
    overflow: hidden;
}

/* title bars */
.titlebar, .win-title {
    display: flex;
    align-items: center;
    background: linear-gradient(#0a50d8 0, #3c96ff 2px, #0a58ec 5px, #0053e4 10px, #0064ff 19px, #0062fa 88%, #0040cc 100%);
}
.titlebar {
    height: 26px;
    padding: 0 2px;
    gap: 3px;
}
.app-icon { width: 17px; height: 18px; }
h1, h2 {
    font-size: 12px;
    font-weight: bold;
    color: #fff;
    text-shadow: 1px 1px #0a2a80;
    white-space: nowrap;
}
.win-buttons {
    display: flex;
    gap: 2px;
    margin-left: auto;
}
.wb {
    width: 21px;
    height: 21px;
    border: 1px solid #fff;
    border-radius: 3px;
    background: linear-gradient(135deg, #7ba2f0, #2b62e4 45%, #1c50d4);
}
.wb svg { width: 19px; height: 19px; }
.wb.close { background: linear-gradient(135deg, #f0a088, #e2512b 45%, #cc3c14); }

/* menu + toolbar */
.menubar {
    display: flex;
    gap: 11px;
    height: 21px;
    padding: 0 5px 2px;
    background-color: #ecebdb;
    border-bottom: 1px solid #aca899;
}
.toolbar {
    display: flex;
    align-items: center;
    height: 30px;
    padding-left: 2px;
    background-color: #ecebdb;
    border-top: 1px solid #fff;
    border-bottom: 1px solid #73716a;
}
.toolbar button {
    display: flex;
    align-items: center;
    justify-content: center;
    width: 23px;
    height: 22px;
}
.toolbar svg { width: 17px; height: 17px; }
.grip {
    width: 6px;
    height: 26px;
    border: solid #aca899;
    border-width: 0 1px;
    box-shadow: inset 1px 0 #fff, inset -2px 0 #fff;
}
.sep {
    width: 8px;
    height: 18px;
    background: linear-gradient(90deg, transparent 3px, #aca899 3px 4px, #fff 4px 5px, transparent 5px);
}
.toolbar .pressed, .dither, .pin, .tool.active, .delta, .htrack, .vscroll {
    background: conic-gradient(#fff 25%, #ecebdb 0 50%, #fff 0 75%, #ecebdb 0) 0 0 / 2px 2px;
}
.toolbar .pressed, .pin, .dither {
    border: 1px solid;
    border-color: #aca899 #fff #fff #aca899;
}

.desktop {
    flex: 1;
    position: relative;
    overflow: hidden;
    background-color: #848484;
    border-right: 2px solid #f4f3e8;
    border-bottom: 1px solid #fff;
}
.btn {
    display: flex;
    align-items: center;
    justify-content: center;
    flex: none;
    background-color: #ecebdb;
    border: 1px solid;
    border-color: #fff #716f64 #716f64 #fff;
    box-shadow: inset -1px -1px #aca899;
}
.btn:disabled { color: #aca899; }
.i-right { width: 4px; height: 8px; }

/* palettes */
.palette {
    position: absolute;
    display: flex;
    flex-direction: column;
    padding: 0 4px 4px;
    background-color: #0a4ff0;
    box-shadow: inset 1px 0 #0034c8, inset -2px -2px #001c9c;
}
.pal-title {
    display: flex;
    align-items: center;
    justify-content: space-between;
    height: 22px;
    margin: 0 -4px;
    padding: 0 6px 0 3px;
    background: linear-gradient(#0034c8 0, #2a7cff 2px, #0058ec 5px, #0058ec 70%, #0064fa 100%);
}
.pal-title h2 { font-size: 11px; }
.pal-close {
    width: 13px;
    height: 13px;
    border: 1px solid #fff;
    border-radius: 2px;
    background-color: #e2552f;
}
.pal-close svg { width: 11px; height: 11px; shape-rendering: auto; }
.pal-body {
    flex: 1;
    min-height: 0;
    overflow: hidden;
    background-color: #ecebdb;
}
.infobox { left: 2px; top: 2px; width: 170px; height: 302px; }
.navigator { left: 2px; top: 304px; width: 170px; height: 144px; }
.preview { left: 2px; top: 444px; width: 170px; bottom: 0; }

.info-row {
    display: flex;
    align-items: center;
    padding: 8px 2px 1px 1px;
    border-bottom: 1px solid #aca899;
    box-shadow: 0 1px #fff;
}
.info-btn { width: 40px; height: 28px; }
.info-btn svg { width: 40px; height: 28px; margin: -1px; }
.pressed-flat {
    display: flex;
    align-items: center;
    justify-content: center;
    width: 31px;
    height: 22px;
    margin-left: auto;
    border: 1px solid;
    border-color: #aca899 #fff #fff #aca899;
}
.arrow { width: 10px; height: 16px; }

.tools {
    left: 172px;
    top: 2px;
    width: 40px;
    padding: 0 3px 3px;
}
.tools .pal-title { height: 20px; padding-right: 5px; justify-content: flex-end; }
.tool-list {
    display: flex;
    flex-direction: column;
    background-color: #ecebdb;
}
.tool-list i { height: 3px; }
.tool {
    height: 24px;
    background-color: #ecebdb;
    border: 1px solid;
    border-color: #fff #716f64 #716f64 #fff;
    box-shadow: inset -1px 0 #aca899;
}
.tool svg { width: 34px; height: 24px; margin: -1px; }
.tool.active { border-color: #716f64 #fff #fff #716f64; outline: 1px dotted #000; outline-offset: -4px; }
.dim-text { font-size: 8px; }
.text-tool { font: bold 19px "Liberation Serif", serif; }

/* navigator */
.nav-row {
    display: flex;
    justify-content: space-between;
    padding: 2px 5px 4px 4px;
}
.nav-btn { width: 44px; height: 20px; gap: 2px; }
.nav-list { width: 10px; height: 14px; }
.i-house { width: 16px; height: 14px; }
.i-story { width: 16px; height: 12px; }
.i-box { width: 15px; height: 12px; }
.pin { width: 20px; height: 20px; }
.pin svg { width: 14px; height: 14px; margin: 0 auto; }
.tabs {
    display: flex;
    align-items: flex-end;
    padding-left: 5px;
    font-size: 10px;
}
.tab {
    height: 18px;
    padding: 0 4px;
    border: 1px solid;
    border-color: #fff #716f64 transparent #fff;
    border-radius: 2px 2px 0 0;
}
.tab.on { height: 20px; padding: 0 6px; }
.tab-panel {
    margin: 0 5px;
    padding: 3px 4px 0 3px;
    border: solid #fff;
    border-width: 1px 0 0 1px;
    box-shadow: 1px 0 #716f64;
}
.tree-box {
    display: flex;
    height: 80px;
    background-color: #fff;
    border: 1px solid #716f64;
    overflow: hidden;
}
.tree {
    flex: 1;
    min-width: 0;
    overflow: hidden;
    list-style: none;
    white-space: nowrap;
}
/* dotted guides: one column for the root, a second for its children */
.tree li {
    display: flex;
    align-items: center;
    gap: 3px;
    height: 16px;
    padding-left: 4px;
    background:
        repeating-linear-gradient(#aaa 0 1px, transparent 1px 2px) 8px 8px / 1px 100% no-repeat,
        repeating-linear-gradient(90deg, #aaa 0 1px, transparent 1px 2px) 14px 8px / 6px 1px no-repeat;
}
.tree .l2, .tree .l3 {
    background:
        repeating-linear-gradient(#aaa 0 1px, transparent 1px 2px) 8px 0 / 1px 100% no-repeat,
        repeating-linear-gradient(#aaa 0 1px, transparent 1px 2px) 27px 0 / 1px 100% no-repeat,
        repeating-linear-gradient(90deg, #aaa 0 1px, transparent 1px 2px) 28px 8px / 10px 1px no-repeat;
}
.tree .l2 { padding-left: 23px; }
.tree .l2.leaf { padding-left: 39px; }
.tree .l3 {
    padding-left: 58px;
    gap: 2px;
    background:
        repeating-linear-gradient(#aaa 0 1px, transparent 1px 2px) 8px 0 / 1px 100% no-repeat,
        repeating-linear-gradient(#aaa 0 1px, transparent 1px 2px) 27px 0 / 1px 100% no-repeat,
        repeating-linear-gradient(90deg, #aaa 0 1px, transparent 1px 2px) 47px 8px / 10px 1px no-repeat;
}
.pm {
    width: 9px;
    height: 9px;
    margin-right: 4px;
    border: 1px solid #aca899;
    background-color: #fff;
    font-size: 9px;
    line-height: 7px;
    text-align: center;
}
.sel { border: 1px solid #316ac5; background-color: #fff; line-height: 13px; }
.tree-scroll {
    display: flex;
    flex-direction: column;
    width: 16px;
    background-color: #c6d5fb;
}
.tree-scroll button {
    height: 16px;
    border: 1px solid #9ab4f0;
    border-radius: 2px;
}
.tree-scroll svg { width: 10px; height: 6px; margin: 0 auto; }
.tree-scroll span {
    flex: 1;
    border: 1px solid #9ab4f0;
    background: linear-gradient(90deg, #cfdcfd, #b6c9f6);
}

/* preview */
.go-row {
    display: flex;
    justify-content: space-between;
    padding: 3px 6px 2px 5px;
    font-size: 10px;
}
.go-name {
    display: flex;
    align-items: center;
    gap: 8px;
    width: 102px;
    padding-left: 4px;
    white-space: nowrap;
    border: 1px solid;
    border-color: #fff #aca899 #aca899 #fff;
}
.go { width: 36px; height: 20px; }
.thumb {
    margin: 0 5px 4px 6px;
    padding: 2px 0 0;
    border: 1px solid;
    border-color: #716f64 #fff #fff #716f64;
    background-color: #fff;
}
.thumb svg {
    width: 100%;
    height: 114px;
    border: solid #000063;
    border-width: 3px 0;
}
.zoom-row {
    display: flex;
    align-items: center;
    gap: 8px;
    padding: 0 5px 4px;
    font-size: 10px;
}
.zoom-row .btn { width: 18px; height: 18px; }
.zoom-row .btn svg:not(.i-right) { width: 14px; height: 14px; }
.zoom-row .last { margin-left: auto; }
.zoom-row input {
    appearance: none;
    width: 24px;
    height: 16px;
}
.zoom-row input::-webkit-slider-runnable-track {
    height: 3px;
    border: 1px solid #8c8a7c;
    border-bottom-color: #fff;
}
.zoom-row input::-webkit-slider-thumb {
    appearance: none;
    width: 6px;
    height: 13px;
    margin-top: -6px;
    background-color: #ecebdb;
    border: 1px solid;
    border-color: #fff #716f64 #716f64 #fff;
    border-radius: 0 0 3px 3px;
}

/* document windows */
.window {
    position: absolute;
    border-radius: 7px 7px 0 0;
    overflow: hidden;
}
.win-3d {
    left: 278px;
    right: 49px;
    top: 2px;
    height: 40px;
    background-color: #7b96e4;
}
.win-3d .win-title {
    height: 27px;
    padding: 0 6px;
    gap: 4px;
    background: linear-gradient(#6a88d8 0, #98b0f0 2px, #7b92e0 8px, #7b94e4 14px, #8caaf0 100%);
}
.win-3d h2 { color: #d8e4f8; text-shadow: none; }
.win-3d .wb { border-color: #b8c8f4; background: #4a78e8; }
.win-3d .close { background: #b06078; }
.win-plan {
    left: 227px;
    right: 17px;
    top: 26px;
    bottom: 75px;
    display: flex;
    flex-direction: column;
    padding: 0 4px 4px;
    background-color: #0a4ff0;
    box-shadow: inset 1px 0 #0034c8, inset -2px -2px #001c9c;
}
.win-plan .win-title {
    height: 30px;
    margin: 0 -4px;
    padding: 0 6px;
    gap: 5px;
}
.doc-icon { width: 13px; height: 16px; }
.win-3d .doc-icon { width: 15px; height: 17px; }
.win-body {
    flex: 1;
    min-height: 0;
    display: grid;
    grid-template-columns: 1fr 17px;
    grid-template-rows: 1fr 17px;
    border: 1px solid #716f64;
    padding: 1px;
    background-color: #ecebdb;
}
.plan {
    width: 100%;
    height: 100%;
    background-color: #fdfdfd;
}
.vscroll {
    display: flex;
    flex-direction: column;
    align-items: flex-end;
}
.vscroll .btn { width: 16px; height: 16px; }
.vscroll svg { width: 8px; height: 4px; }
.vthumb {
    width: 16px;
    height: 35%;
    margin: 142px 0 auto;
}
.vthumb, .hthumb {
    background-color: #ecebdb;
    border: 1px solid;
    border-color: #fff #716f64 #716f64 #fff;
    box-shadow: inset -1px -1px #aca899;
}
.view-bar {
    display: flex;
    font-size: 10px;
}
.vb { width: 24px; }
.vb svg:not(.i-right) { height: 14px; max-width: 20px; margin: 0 auto; }
.scale { width: 64px; }
.sq { width: 17px; }
.sq svg { width: 4px; height: 8px; }
.htrack {
    flex: 1;
    display: flex;
    padding-left: 118px;
}
.hthumb { width: 129px; }
.resize { width: 17px; height: 17px; }

/* floating bars */
.bar {
    position: absolute;
    display: flex;
    align-items: center;
    height: 34px;
    padding: 0 3px;
    gap: 4px;
    background-color: #ecebdb;
    border: 1px solid;
    border-color: #fff #716f64 #716f64 #fff;
    font-size: 10px;
}
.bar-control { left: 216px; bottom: 36px; }
.bar-coords { left: 213px; bottom: 1px; }
.strip {
    width: 17px;
    height: 27px;
    padding: 1px;
    background: linear-gradient(#3c96ff, #0a54e4 50%, #0a54e4);
}
.strip .btn { width: 14px; height: 13px; }
.strip svg { width: 8px; height: 8px; }
.cb { width: 30px; height: 27px; }
.cb svg { width: 26px; height: 24px; }
.cs { width: 27px; height: 23px; }
.cs svg { width: 22px; height: 20px; }
.cc { width: 26px; height: 27px; }
.cc svg { width: 24px; height: 22px; }
.cd { width: 30px; height: 27px; }
.cd svg { width: 28px; height: 24px; }
.vr {
    width: 2px;
    height: 28px;
    background: linear-gradient(90deg, #aca899 50%, #fff 50%);
}
.bar-control .vr { margin: 0 -2px; }
.bar-coords .vr { margin-right: -1px; }
.half {
    display: flex;
    flex-direction: column;
    width: 66px;
    line-height: 13px;
}
.half + .mini { align-self: flex-start; margin-top: 4px; }
.dim { color: #aca899; }
.mini { width: 13px; height: 13px; }
.mini .i-right { height: 6px; }
.wide { width: 55px; height: 21px; font-size: 11px; margin-right: 1px; }
.boxed { width: 17px; height: 17px; }
.boxed svg { width: 11px; height: 10px; }
.delta {
    width: 14px;
    height: 27px;
    border: 1px solid;
    border-color: #716f64 #fff #fff #716f64;
    font-weight: bold;
    font-size: 13px;
}
.coords {
    display: grid;
    grid-template-columns: 24px 93px;
    gap: 1px 0;
    line-height: 13px;
}
.coords label { text-align: right; padding-right: 4px; }
.bar input {
    width: 93px;
    height: 13px;
    background-color: #fff;
}
.zcoord { width: 117px; }
.zcoord div {
    display: flex;
    align-items: center;
    justify-content: space-between;
    height: 14px;
    padding-left: 2px;
}

/* status */
.statusbar {
    display: flex;
    align-items: center;
    gap: 2px;
    height: 22px;
    padding: 2px 2px 1px;
    background-color: #ecebdb;
}
.msg { flex: 1; }
.cell {
    display: flex;
    align-items: center;
    justify-content: space-between;
    height: 19px;
    border: 1px solid;
    border-color: #aca899 #fff #fff #aca899;
}
.disk { width: 102px; padding: 0 8px 0 4px; }
.disk svg { width: 26px; height: 14px; }
.mem { width: 86px; padding: 0 8px 0 2px; }
.mem svg { width: 28px; height: 14px; }
.taskbar {
    height: 1px;
    background: linear-gradient(90deg, #3c8c3c 92px, #2a6ae8 92px 932px, #18a0f0 932px);
}
```
